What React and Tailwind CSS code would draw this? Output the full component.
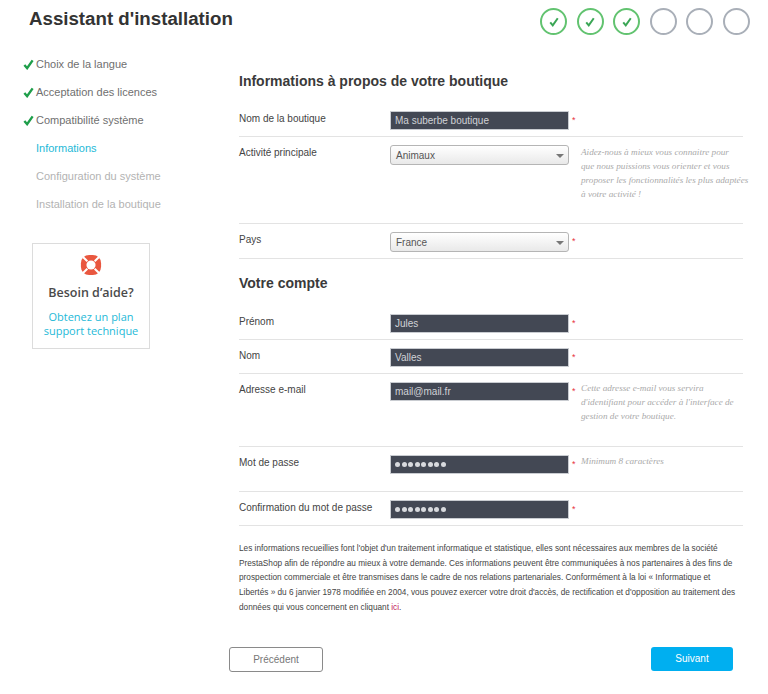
const steps = [true, true, true, false, false, false];

const menu = [
  { label: "Choix de la langue", state: "done" },
  { label: "Acceptation des licences", state: "done" },
  { label: "Compatibilité système", state: "done" },
  { label: "Informations", state: "current" },
  { label: "Configuration du système", state: "todo" },
  { label: "Installation de la boutique", state: "todo" },
];

const menuColors = {
  done: "text-[#6f6f6f]",
  current: "text-[#25b9d7]",
  todo: "text-[#b3b3b3]",
};

const Check = ({ className, width = 2 }) => (
  <svg viewBox="0 0 12 12" className={className} fill="none" stroke="currentColor" strokeWidth={width}>
    <path d="M1.5 6.5 L4.5 10 L10.5 1.5" />
  </svg>
);

const StepCircle = ({ done }) => (
  <div
    className={`w-[27px] h-[27px] rounded-full border-2 flex items-center justify-center ${
      done ? "border-[#62c370] text-[#3aa655]" : "border-[#a9afb8]"
    }`}
  >
    {done && <Check className="w-[10px] h-[10px]" width={2.4} />}
  </div>
);

const Star = () => <span className="shrink-0 text-[#e8343f] text-[9px] leading-none ml-[3px] mt-[5px] w-[9px]">*</span>;

const TextInput = ({ value }) => (
  <div className="w-[179px] shrink-0 h-[19px] bg-[#434854] border border-[#c9ccd1] px-[4px] text-[10px] leading-[17px] text-[#d0d2d6] truncate">
    {value}
  </div>
);

const PasswordInput = () => (
  <div className="w-[179px] shrink-0 h-[19px] bg-[#434854] border border-[#c9ccd1] px-[4px] flex items-center gap-[1.5px]">
    {[0, 1, 2, 3, 4, 5, 6, 7].map((i) => (
      <span key={i} className="w-[5px] h-[5px] rounded-full bg-[#d8dade]" />
    ))}
  </div>
);

const SelectBox = ({ value }) => (
  <div className="w-[179px] shrink-0 h-[20px] rounded-[3px] border border-[#b5b5b5] bg-gradient-to-b from-white to-[#e9e9e9] pl-[5px] pr-[4px] flex items-center justify-between text-[10px] text-[#555]">
    <span>{value}</span>
    <span className="w-0 h-0 mt-[2px] border-x-[4px] border-x-transparent border-t-[4px] border-t-[#777]" />
  </div>
);

const Row = ({ label, children, hint, height, star = true, pad = "pt-[8px]", hintTop = "-mt-[1px]" }) => (
  <div className={`flex border-b border-[#e3e3e3] ${pad} ${height}`}>
    <div className="w-[151px] pt-[1px] text-[10px] leading-[13px] text-[#444] shrink-0">{label}</div>
    {children}
    {star ? <Star /> : <span className="w-[12px] shrink-0" />}
    {hint && (
      <p className={`${hintTop} whitespace-nowrap font-['Liberation_Serif',serif] italic text-[9.2px] leading-[14px] text-[#aaa]`}>
        {hint}
      </p>
    )}
  </div>
);

export default function App() {
  return (
    <div className="relative w-[768px] h-[694px] bg-white font-['Liberation_Sans',Arial,sans-serif] overflow-hidden">
      <header className="flex justify-between pl-[29px] pr-[18px] pt-[8px]">
        <h1 className="text-[18.7px] leading-[21px] font-bold text-[#333]">Assistant d'installation</h1>
        <div className="flex gap-[9.6px]">
          {steps.map((done, i) => (
            <StepCircle key={i} done={done} />
          ))}
        </div>
      </header>

      <div className="flex pt-[17px]">
        <aside className="w-[239px] shrink-0 pl-[23px] -mt-[2px]">
          <ul>
            {menu.map((item) => (
              <li key={item.label} className={`h-[28px] flex items-center text-[11px] ${menuColors[item.state]}`}>
                <span className="w-[13px] shrink-0 text-[#1e9e4a]">
                  {item.state === "done" && <Check className="w-[11px] h-[11px]" width={2.6} />}
                </span>
                {item.label}
              </li>
            ))}
          </ul>
          <div className="w-[118px] h-[106px] ml-[9px] mt-[25px] border border-[#dcdcdc] flex flex-col items-center font-['Open_Sans',sans-serif]">
            <svg viewBox="0 0 24 24" className="w-[22px] h-[22px] mt-[10px]">
              <rect x="1" y="1" width="22" height="22" rx="9" fill="#e9573f" />
              <circle cx="12" cy="12" r="5" fill="white" />
              <path d="M3 3 L8 8 M21 3 L16 8 M3 21 L8 16 M21 21 L16 16" stroke="white" strokeWidth="2.2" />
            </svg>
            <div className="mt-[8px] text-[12.5px] leading-[18px] font-semibold text-[#4a4a4a]">Besoin d’aide?</div>
            <div className="mt-[8px] text-[11px] leading-[14px] text-[#25b9d7] text-center">
              Obtenez un plan
              <br />
              support technique
            </div>
          </div>
        </aside>

        <main className="w-[504px] pt-[21px]">
          <h2 className="text-[14px] leading-[16px] font-bold text-[#3a3a3a] mb-[13px]">
            Informations à propos de votre boutique
          </h2>
          <Row label="Nom de la boutique" height="h-[35px]" pad="pt-[9px]">
            <TextInput value="Ma suberbe boutique" />
          </Row>
          <Row
            label="Activité principale"
            height="h-[87px]"
            star={false}
            hintTop="mt-0"
            hint={
              <>
                Aidez-nous à mieux vous connaitre pour
                <br />
                que nous puissions vous orienter et vous
                <br />
                proposer les fonctionnalités les plus adaptées
                <br />à votre activité !
              </>
            }
          >
            <SelectBox value="Animaux" />
          </Row>
          <Row label="Pays" height="h-[35px]">
            <SelectBox value="France" />
          </Row>

          <h2 className="text-[14px] leading-[16px] font-bold text-[#3a3a3a] mt-[16px] mb-[14px]">Votre compte</h2>
          <Row label="Prénom" height="h-[35px]" pad="pt-[9px]">
            <TextInput value="Jules" />
          </Row>
          <Row label="Nom" height="h-[34px]">
            <TextInput value="Valles" />
          </Row>
          <Row
            label="Adresse e-mail"
            height="h-[73px]"
            hint={
              <>
                Cette adresse e-mail vous servira
                <br />
                d'identifiant pour accéder à l'interface de
                <br />
                gestion de votre boutique.
              </>
            }
          >
            <TextInput value="mail@mail.fr" />
          </Row>
          <Row label="Mot de passe" height="h-[45px]" hint="Minimum 8 caractères">
            <PasswordInput />
          </Row>
          <Row label="Confirmation du mot de passe" height="h-[34px]">
            <PasswordInput />
          </Row>

          <p className="mt-[16px] text-[8.25px] leading-[14.7px] text-[#444] whitespace-nowrap">
            Les informations recueillies font l'objet d'un traitement informatique et statistique, elles sont nécessaires
            aux membres de la société
            <br />
            PrestaShop afin de répondre au mieux à votre demande. Ces informations peuvent être communiquées à nos
            partenaires à des fins de
            <br />
            prospection commerciale et être transmises dans le cadre de nos relations partenariales. Conformément à la loi
            « Informatique et
            <br />
            Libertés » du 6 janvier 1978 modifiée en 2004, vous pouvez exercer votre droit d'accès, de rectification et
            d'opposition au traitement des
            <br />
            données qui vous concernent en cliquant <span className="text-[#c2185b]">ici</span>.
          </p>

          <div className="flex justify-between -ml-[10px] w-[504px] mt-[31px]">
            <button className="w-[94px] h-[25px] rounded-[3px] border border-[#8a8a8a] bg-white text-[10px] text-[#777]">
              Précédent
            </button>
            <button className="w-[82px] h-[24px] rounded-[3px] bg-[#00aff0] text-[10px] text-white">Suivant</button>
          </div>
        </main>
      </div>
    </div>
  );
}
